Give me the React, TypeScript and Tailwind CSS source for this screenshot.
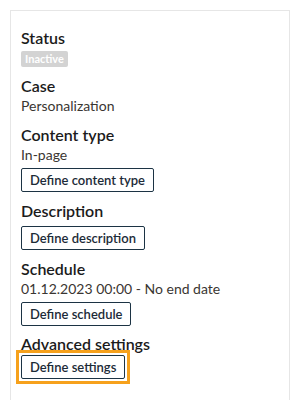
import React from 'react';

const font = { fontFamily: 'Lato, "Noto Sans", sans-serif' };

const Heading: React.FC<{ children: React.ReactNode }> = ({ children }) => (
  <div className="text-[16px] leading-[20px] font-semibold text-[#1b1b1b]">{children}</div>
);

const Value: React.FC<{ children: React.ReactNode }> = ({ children }) => (
  <div className="text-[14px] leading-[20px] text-[#3a3632]">{children}</div>
);

const DefineButton: React.FC<{ label: string; className?: string }> = ({ label, className = '' }) => (
  <button
    className={`flex h-[24px] items-center px-[8px] border border-[#1c3344] rounded-[2px] bg-white text-[13px] leading-[20px] font-semibold text-[#1c2b38] ${className}`}
  >
    {label}
  </button>
);

export default function App() {
  return (
    <div className="w-[300px] h-[400px] overflow-hidden bg-white pt-[10px] px-[10px]" style={font}>
      <div className="h-[420px] border border-[#e6e6e6] px-[10px] pt-[17px]">
        {/* Status */}
        <Heading>Status</Heading>
        <div className="mt-[3px] flex w-fit h-[16px] items-center rounded-[2px] bg-[#d3d3d3] px-[4px] text-[11px] font-bold text-white">
          Inactive
        </div>

        {/* Case */}
        <div className="mt-[9px]">
          <Heading>Case</Heading>
          <Value>Personalization</Value>
        </div>

        {/* Content type */}
        <div className="mt-[9px]">
          <Heading>Content type</Heading>
          <Value>In-page</Value>
          <DefineButton label="Define content type" className="mt-[3px]" />
        </div>

        {/* Description */}
        <div className="mt-[9px]">
          <Heading>Description</Heading>
          <DefineButton label="Define description" className="mt-[5px]" />
        </div>

        {/* Schedule */}
        <div className="mt-[9px]">
          <Heading>Schedule</Heading>
          <Value>01.12.2023 00:00 - No end date</Value>
          <DefineButton label="Define schedule" className="mt-[3px]" />
        </div>

        {/* Advanced settings */}
        <div className="mt-[8px]">
          <Heading>Advanced settings</Heading>
          {/* focus ring */}
          <div className="-ml-[5px] -mt-[4px] w-fit border-[3px] border-[#f6a11c] p-[2px]">
            <DefineButton label="Define settings" />
          </div>
        </div>
      </div>
    </div>
  );
}
